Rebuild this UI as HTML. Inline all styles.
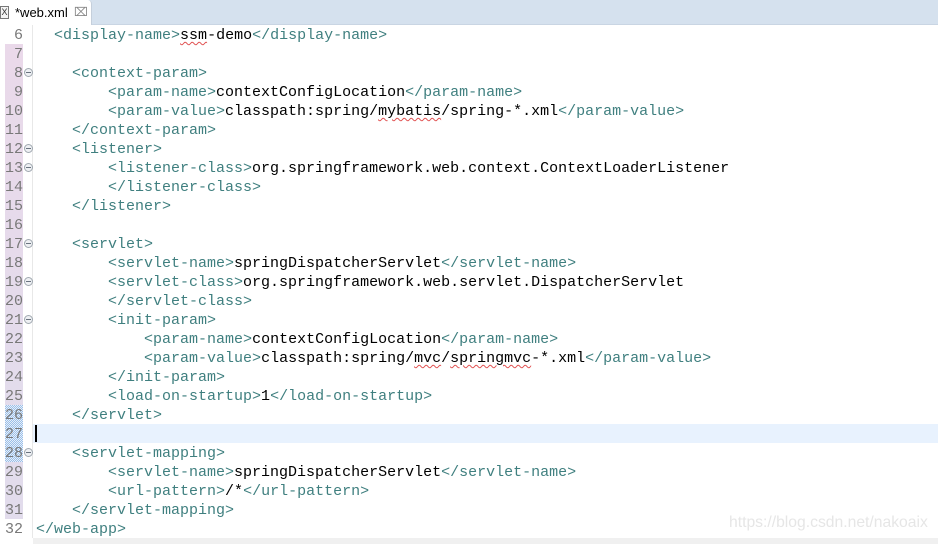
<!DOCTYPE html>
<html><head><meta charset="utf-8"><style>
*{margin:0;padding:0;box-sizing:border-box}
body{width:938px;height:544px;overflow:hidden;background:#fff;position:relative;font-family:"Liberation Mono",monospace}
.tabbar{position:absolute;left:0;top:0;width:938px;height:25px;background:#d5e1ee;border-bottom:1px solid #c9d5e3}
.tab{position:absolute;left:0;top:0;width:92px;height:25px;background:#fff;border-right:1px solid #c5cfdb;border-top-right-radius:4px;font-family:"Liberation Sans",sans-serif;font-size:13px;line-height:25px;color:#000}
.tab .ic{position:absolute;left:0;top:6px;width:9px;height:13px;border:1px solid #777;font-size:9px;line-height:11px;text-align:center;color:#333;background:#f4f4f4}
.tab .t{position:absolute;left:15px;top:0}
.tab .x{position:absolute;left:74px;top:0;color:#888;font-size:12px}
.strip{position:absolute;left:5px;width:18px}
.ln{position:absolute;left:0;width:23px;text-align:right;font-size:15px;color:#787878;line-height:19px}
.fold{position:absolute;left:24px;width:9px;height:9px;border:1px solid #a0a8b0;border-radius:50%;background:#eef0f3}
.fold:after{content:"";position:absolute;left:1px;top:3px;width:5px;height:1px;background:#6a7480}
.sep{position:absolute;left:32px;top:25px;width:1px;height:513px;background:#e8e8e8}
.code{position:absolute;left:36px;font-size:15px;line-height:19px;white-space:pre;color:#000}
.t1{color:#3f7f7f}
.cur{position:absolute;left:33px;top:424px;width:905px;height:19px;background:#e8f2fe}
.caret{position:absolute;left:35px;top:425px;width:2px;height:17px;background:#000}
.wm{position:absolute;left:729px;top:514px;font-family:"Liberation Sans",sans-serif;font-size:15.7px;color:#e6e6e6}
.bot{position:absolute;left:33px;top:538px;width:905px;height:6px;background:#f0f0f0}
u{text-decoration:underline wavy #e05050;text-decoration-thickness:1px;text-underline-offset:2px}
</style></head><body>
<div class="tabbar"><div class="tab"><div class="ic">X</div><span class="t">*web.xml</span><span class="x">&#x2327;</span></div></div>
<div class="strip" style="top:44px;height:399px;background:linear-gradient(#ead9ea,#e2dcec)"></div>
<div class="strip" style="top:405px;height:57px;background:repeating-conic-gradient(#9bbfe8 0 25%,#e6effa 0 50%) 0 0/2px 2px"></div>
<div class="strip" style="top:462px;height:57px;background:#e2dcec"></div>
<div class="cur"></div><div class="caret"></div>
<div class="sep"></div>
<div id="lines"></div>
<div class="wm">https://blog.csdn.net/nakoaix</div>
<div class="bot"></div>
<script>
var L=[
['6','  <t><display-name></t><u>ssm</u>-demo<t></display-name></t>'],
['7',''],
['8','    <t><context-param></t>',1],
['9','        <t><param-name></t>contextConfigLocation<t></param-name></t>'],
['10','        <t><param-value></t>classpath:spring/<u>mybatis</u>/spring-*.xml<t></param-value></t>'],
['11','    <t></context-param></t>'],
['12','    <t><listener></t>',1],
['13','        <t><listener-class></t>org.springframework.web.context.ContextLoaderListener',1],
['14','        <t></listener-class></t>'],
['15','    <t></listener></t>'],
['16',''],
['17','    <t><servlet></t>',1],
['18','        <t><servlet-name></t>springDispatcherServlet<t></servlet-name></t>'],
['19','        <t><servlet-class></t>org.springframework.web.servlet.DispatcherServlet',1],
['20','        <t></servlet-class></t>'],
['21','        <t><init-param></t>',1],
['22','            <t><param-name></t>contextConfigLocation<t></param-name></t>'],
['23','            <t><param-value></t>classpath:spring/<u>mvc</u>/<u>springmvc</u>-*.xml<t></param-value></t>'],
['24','        <t></init-param></t>'],
['25','        <t><load-on-startup></t>1<t></load-on-startup></t>'],
['26','    <t></servlet></t>'],
['27',''],
['28','    <t><servlet-mapping></t>',1],
['29','        <t><servlet-name></t>springDispatcherServlet<t></servlet-name></t>'],
['30','        <t><url-pattern></t>/*<t></url-pattern></t>'],
['31','    <t></servlet-mapping></t>'],
['32','<t></web-app></t>']];
function esc(s){return s.replace(/&/g,'&amp;').replace(/</g,'&lt;').replace(/>/g,'&gt;');}
var h='';
L.forEach(function(l,i){var y=26+i*19;
var c=l[1].split(/(<t>.*?<\/t>|<u>.*?<\/u>)/).map(function(p){
if(p.indexOf('<t>')==0)return '<span class="t1">'+esc(p.slice(3,-4))+'</span>';
if(p.indexOf('<u>')==0)return '<u>'+esc(p.slice(3,-4))+'</u>';
return esc(p);}).join('');
h+='<div class="ln" style="top:'+y+'px">'+l[0]+'</div>';
if(l[2])h+='<div class="fold" style="top:'+(y+4)+'px"></div>';
h+='<div class="code" style="top:'+y+'px">'+c+'</div>';});
document.getElementById('lines').innerHTML=h;
</script>
</body></html>
